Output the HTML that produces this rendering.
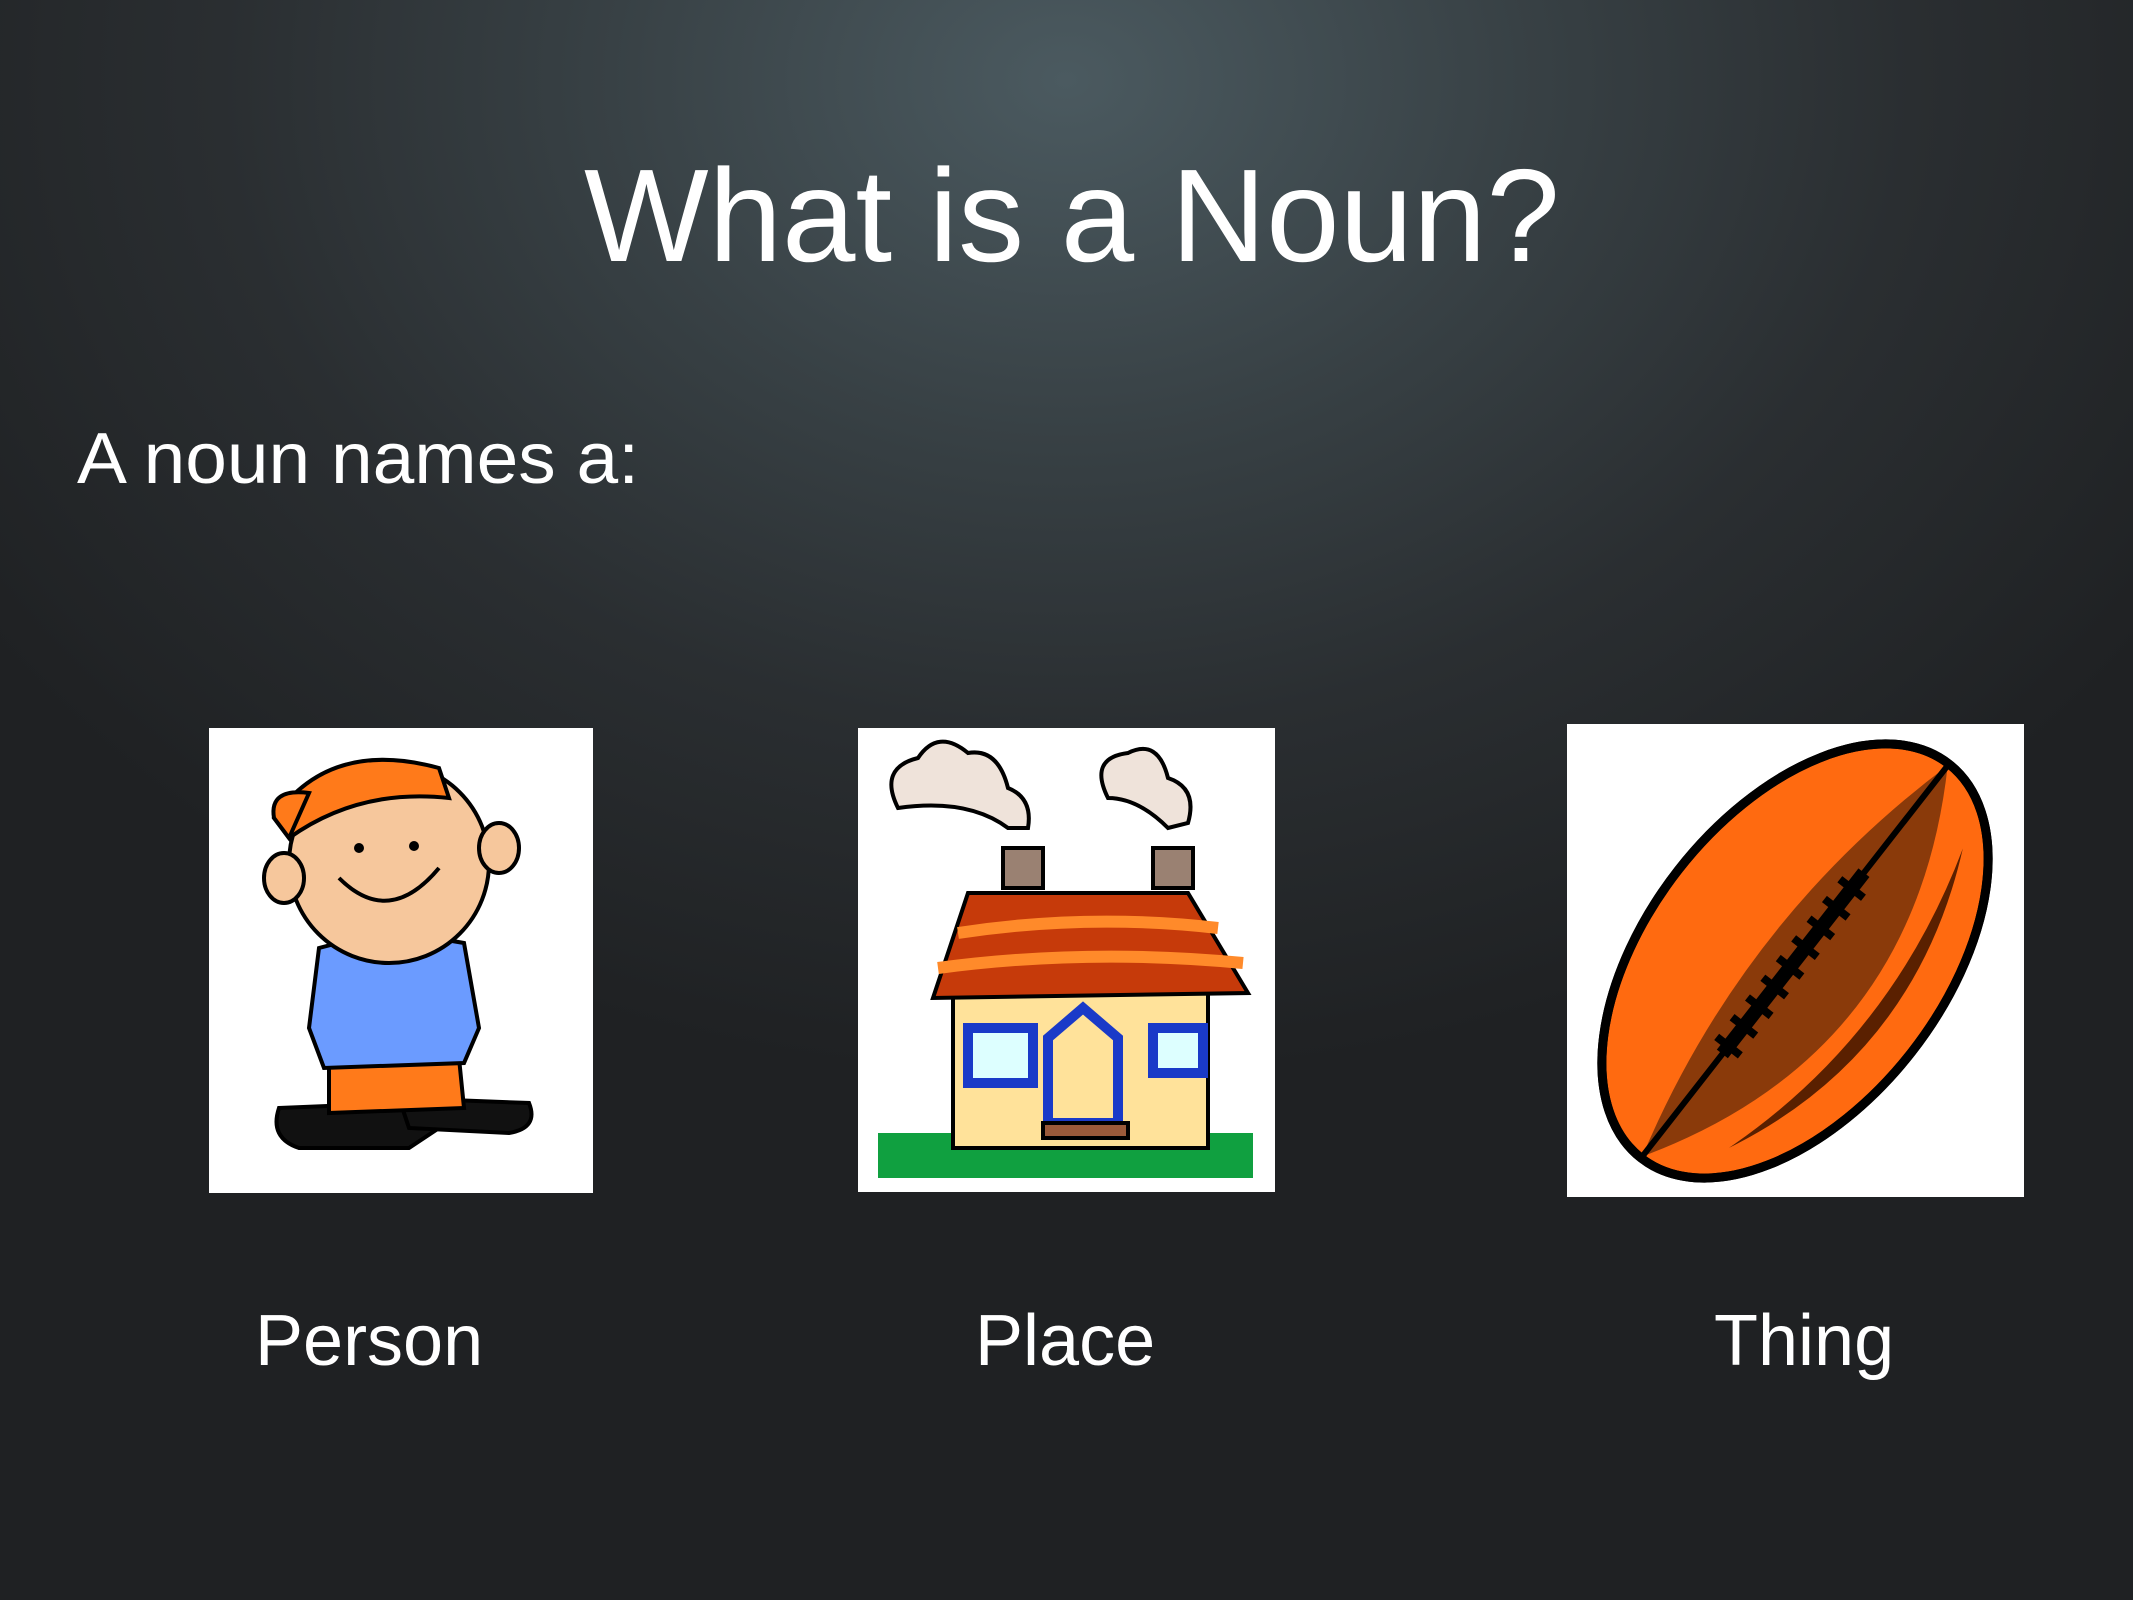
<!DOCTYPE html>
<html><head><meta charset="utf-8"><style>
html,body{margin:0;padding:0}
body{width:2133px;height:1600px;overflow:hidden;position:relative;font-family:"Liberation Sans",sans-serif;color:#fff;
background:radial-gradient(ellipse 1300px 1000px at 1066px 80px,#4b5a60 0%,#384145 35%,#2a2e31 65%,#1f2123 100%);}
.t{position:absolute;white-space:nowrap;transform-origin:left top}
.box{position:absolute;background:#fff}
</style></head><body>
<div class="t" style="left:584px;top:140px;font-size:132px">What is a Noun?</div>
<div class="t" style="left:77px;top:418px;font-size:72px;transform:scaleX(1.04)">A noun names a:</div>
<div class="t" style="left:255px;top:1300px;font-size:72px">Person</div>
<div class="t" style="left:975px;top:1300px;font-size:72px">Place</div>
<div class="t" style="left:1714px;top:1300px;font-size:72px">Thing</div>

<div class="box" style="left:209px;top:728px;width:384px;height:465px">
<svg width="384" height="465" viewBox="0 0 384 465">
<g stroke="#000" stroke-width="4">
<path d="M70 380 L190 375 L230 400 L200 420 L90 420 Q60 410 70 380Z" fill="#111"/>
<path d="M190 370 L320 375 Q330 400 300 405 L200 400Z" fill="#111"/>
<path d="M120 330 L250 330 L255 380 L120 385Z" fill="#ff7a1a"/>
<path d="M110 220 Q180 200 255 215 L270 300 L255 335 L115 340 L100 300Z" fill="#6b9bff"/>
<circle cx="180" cy="135" r="100" fill="#f6c79c"/>
<ellipse cx="75" cy="150" rx="20" ry="25" fill="#f6c79c"/>
<ellipse cx="290" cy="120" rx="20" ry="25" fill="#f6c79c"/>
<path d="M65 90 Q120 10 230 40 L240 70 Q150 60 80 110Z" fill="#ff7a1a"/>
<path d="M65 90 Q60 60 100 65 L80 110Z" fill="#ff7a1a"/>
<path d="M130 150 Q180 200 230 140" fill="none"/>
</g>
<circle cx="150" cy="120" r="5"/><circle cx="205" cy="118" r="5"/>
</svg></div>

<div class="box" style="left:858px;top:728px;width:417px;height:464px">
<svg width="417" height="464" viewBox="0 0 417 464">
<g stroke="#000" stroke-width="4">
<path d="M40 80 Q20 40 60 30 Q80 0 110 25 Q140 20 150 60 Q175 70 170 100 L150 100 Q110 70 40 80Z" fill="#efe3da"/>
<path d="M250 70 Q230 30 270 25 Q300 10 310 50 Q340 60 330 95 L310 100 Q280 70 250 70Z" fill="#efe3da"/>
<rect x="145" y="120" width="40" height="40" fill="#9a8172"/>
<rect x="295" y="120" width="40" height="40" fill="#9a8172"/>
<rect x="20" y="405" width="375" height="45" fill="#10a040" stroke="none"/>
<rect x="95" y="260" width="255" height="160" fill="#ffe29a"/>
<path d="M110 165 L330 165 L390 265 L75 270Z" fill="#c63a0a"/>
<path d="M80 240 Q230 220 385 235" fill="none" stroke="#ff8a2a" stroke-width="12"/>
<path d="M100 205 Q230 185 360 200" fill="none" stroke="#ff8a2a" stroke-width="12"/>
<rect x="110" y="300" width="65" height="55" fill="#dff" stroke="#1a3ac8" stroke-width="10"/>
<rect x="295" y="300" width="50" height="45" fill="#dff" stroke="#1a3ac8" stroke-width="10"/>
<path d="M190 310 L225 280 L260 310 L260 395 L190 395Z" fill="#ffe29a" stroke="#1a3ac8" stroke-width="10"/>
<rect x="185" y="395" width="85" height="15" fill="#9a5a3a"/>
</g></svg></div>

<div class="box" style="left:1567px;top:724px;width:457px;height:473px">
<svg width="457" height="473" viewBox="0 0 457 473">
<g transform="rotate(-52 228 237)">
<ellipse cx="228" cy="237" rx="250" ry="148" fill="#ff6a10" stroke="#000" stroke-width="9"/>
<path d="M-20 237 Q228 170 476 237 Q228 390 -20 237Z" fill="#8a3a0a"/>
<path d="M40 300 Q228 360 420 300 Q228 390 40 300Z" fill="#5a2000"/>
<ellipse cx="228" cy="237" rx="250" ry="148" fill="none" stroke="#000" stroke-width="9"/>
<line x1="-20" y1="237" x2="476" y2="237" stroke="#000" stroke-width="6"/>
<line x1="110" y1="237" x2="340" y2="237" stroke="#000" stroke-width="14"/>
<g stroke="#000" stroke-width="8">
<line x1="120" y1="222" x2="120" y2="252"/><line x1="145" y1="222" x2="145" y2="252"/><line x1="170" y1="222" x2="170" y2="252"/><line x1="195" y1="222" x2="195" y2="252"/><line x1="220" y1="222" x2="220" y2="252"/><line x1="245" y1="222" x2="245" y2="252"/><line x1="270" y1="222" x2="270" y2="252"/><line x1="295" y1="222" x2="295" y2="252"/><line x1="320" y1="222" x2="320" y2="252"/>
</g></g></svg></div>
</body></html>
